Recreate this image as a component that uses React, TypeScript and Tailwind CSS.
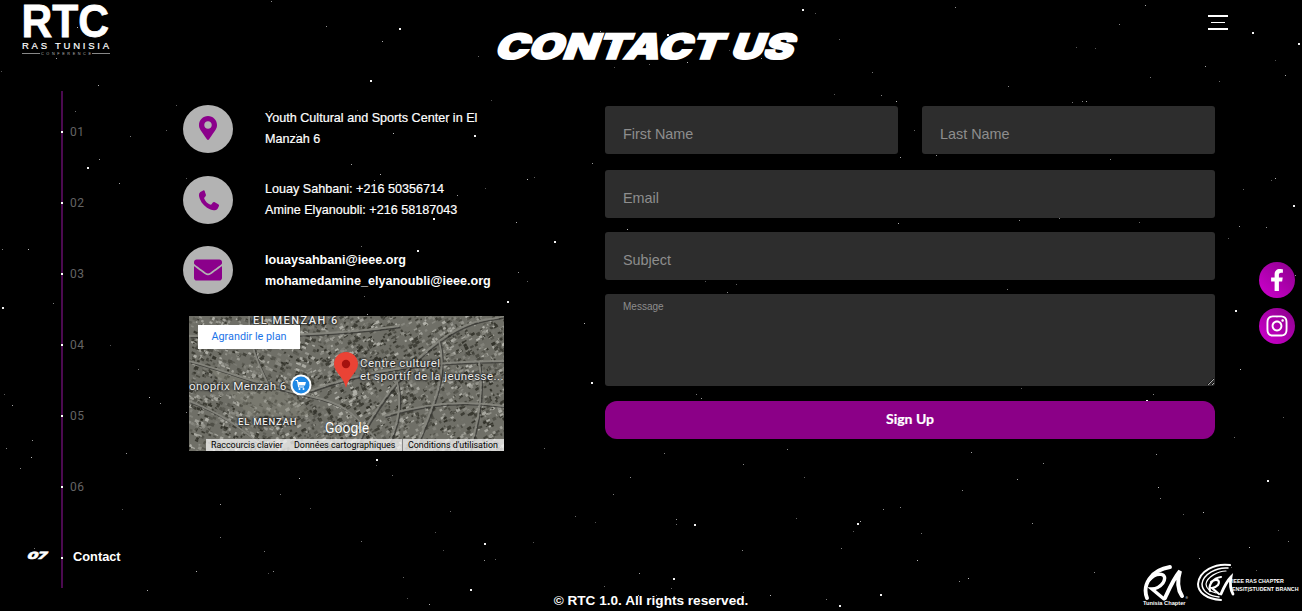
import React from "react";
import { FaMapMarkerAlt, FaEnvelope, FaFacebookF, FaInstagram } from "react-icons/fa";

function rng(seed: number) {
  let s = seed;
  return () => {
    s = (s * 1664525 + 1013904223) % 4294967296;
    return s / 4294967296;
  };
}

function Stars() {
  const r = rng(77);
  const stars = Array.from({ length: 300 }, () => {
    const big = r() < 0.14;
    return { x: Math.floor(r() * 1302), y: Math.floor(r() * 611), s: big ? 2 : 1, o: big ? 0.95 : 0.3 + r() * 0.45 };
  });
  return (
    <svg className="absolute inset-0" width="1302" height="611" shapeRendering="crispEdges">
      {stars.map((t, i) => (
        <rect key={i} x={t.x} y={t.y} width={t.s} height={t.s} fill="#fff" opacity={t.o} />
      ))}
    </svg>
  );
}

function MapArt() {
  const r = rng(2024);
  const tiles: { x: number; y: number; w: number; h: number; c: string; a: number }[] = [];
  for (let i = 0; i < 3400; i++) {
    const dark = r() < 0.5;
    const v = Math.floor(dark ? 50 + r() * 45 : 110 + r() * 70);
    const x = r() * 315;
    const y = r() * 135;
    tiles.push({
      x,
      y,
      w: 1.5 + r() * 3,
      h: 1.2 + r() * 2,
      c: `rgb(${v},${v},${v - 8})`,
      a: x + y * 0.6 < 150 ? 25 : -30,
    });
  }
  const roads = [
    "M0 45 C40 55 70 70 120 80 S170 110 200 135",
    "M165 135 C180 100 215 50 250 25 S300 5 315 0",
    "M0 20 C60 20 140 20 210 10",
    "M120 75 C160 60 220 45 315 45",
    "M195 100 C240 85 280 85 315 90",
    "M0 85 C40 100 60 120 80 135",
    "M60 0 C60 30 70 50 80 70",
    "M250 25 C260 60 240 100 225 135",
    "M205 55 C215 85 210 110 195 135",
    "M290 45 C295 75 290 105 280 135",
  ];
  return (
    <svg className="absolute inset-0 blur-[0.5px]" width="315" height="135">
      <rect width="315" height="135" fill="#6f6f67" />
      {tiles.map((t, i) => (
        <rect key={i} x={t.x} y={t.y} width={t.w} height={t.h} fill={t.c} transform={`rotate(${t.a} ${t.x} ${t.y})`} />
      ))}
      <path d="M20 52 L95 70 L125 100 L60 100 Z" fill="#85857a" opacity="0.45" />
      <g fill="none" stroke="#333330" strokeWidth="1.400" opacity="0.75">
        {roads.map((d, i) => (
          <path key={i} d={d} transform="translate(1.500 1.500)" />
        ))}
      </g>
      <g fill="none" stroke="#86867e" strokeWidth="1.800" opacity="0.95">
        {roads.map((d, i) => (
          <path key={i} d={d} />
        ))}
      </g>
      <path d="M157 36c-6.600 0-12 5.300-12 11.800 0 8.700 9.500 12.500 12 24.200 2.500-11.700 12-15.500 12-24.200 0-6.500-5.400-11.800-12-11.800z" fill="#ea4335" />
      <circle cx="157" cy="48" r="4.200" fill="#a5120f" />
      <circle cx="112" cy="69" r="10.500" fill="#fff" />
      <circle cx="112" cy="69" r="8.500" fill="#1e88e5" />
      <path d="M106.500 64.500h2l1.200 6.500h5.300" fill="none" stroke="#fff" strokeWidth="1.200" />
      <path d="M109 66h8l-1 3.500h-6.500z" fill="#fff" />
      <circle cx="110.500" cy="73" r="1" fill="#fff" />
      <circle cx="114.500" cy="73" r="1" fill="#fff" />
    </svg>
  );
}

function Logo() {
  return (
    <svg width="90" height="56" viewBox="0 0 90 56" className="ml-[21px] block font-['Liberation_Sans',sans-serif]" fill="#fff">
      <text x="0.500" y="36.500" fontSize="46" fontWeight="700" textLength="87.500" lengthAdjust="spacingAndGlyphs" stroke="#fff" strokeWidth="0.800">RTC</text>
      <text x="1" y="49" fontSize="9.500" fontWeight="400" textLength="87" lengthAdjust="spacing" stroke="#fff" strokeWidth="0.200">RAS TUNISIA</text>
      <rect x="1" y="53" width="18" height="1" fill="#888" />
      <text x="20" y="55" fontSize="3.800" textLength="50" lengthAdjust="spacing" fill="#b5b5b5">CONFERENCE</text>
      <rect x="71" y="53" width="18" height="1" fill="#888" />
    </svg>
  );
}

const navNums = ["01", "02", "03", "04", "05", "06"];

function Nav() {
  return (
    <div className="w-[183px] shrink-0">
      <div className="ml-[61px] flex h-[497px] w-[2px] flex-col bg-[#4b0a50] pt-[5px]">
        {navNums.map((n) => (
          <div key={n} className="flex h-[71px] shrink-0 items-center">
            <span className="h-[2px] w-[2px] shrink-0 bg-white" />
            <span className="ml-[7px] font-['Roboto',sans-serif] text-[12px] tracking-[0.5px] text-[#646464]">{n}</span>
          </div>
        ))}
        <div className="relative flex h-[71px] shrink-0 items-center">
          <span className="h-[2px] w-[2px] shrink-0 bg-white" />
          <span className="absolute left-[-33px] top-[26px] origin-left scale-x-[1.5] skew-x-[-14deg] font-['Inter',sans-serif] text-[10px] font-black leading-[14px] text-white [-webkit-text-stroke:0.5px_white]">07</span>
          <span className="ml-[10px] -mt-[2px] whitespace-nowrap font-['Liberation_Sans',sans-serif] text-[12.800px] font-bold text-white">Contact</span>
        </div>
      </div>
    </div>
  );
}

function Info({ icon, lines, bold, rowCls }: { icon: React.ReactNode; lines: string[]; bold?: boolean; rowCls: string }) {
  return (
    <div className={`flex ${rowCls}`}>
      <div className="flex h-[48px] w-[50px] shrink-0 items-center justify-center rounded-[50%] bg-[#b3b3b3] text-[#8b008b]">{icon}</div>
      <div className={`ml-[32px] font-['Liberation_Sans',sans-serif] text-[12.600px] leading-[20.500px] text-white ${bold ? "pt-[4px] font-bold" : "pt-[3px] [-webkit-text-stroke:0.2px_white]"}`}>
        {lines.map((l) => (
          <div key={l} className="whitespace-nowrap">{l}</div>
        ))}
      </div>
    </div>
  );
}

function PhoneIcon() {
  return (
    <svg width="23" height="23" viewBox="0 0 24 24" fill="currentColor">
      <path d="M6.500 1.500 3.500 3.200C1.500 4.500 1.800 7.500 3 10.500 5 15.500 9 19.500 14 21.500 17 22.800 20 22.500 21.500 20.500L22.800 18C23.200 17.200 23 16.500 22.200 16L18.500 13.800C17.800 13.400 17 13.500 16.500 14.200L15.200 16C14.800 16.500 14.200 16.600 13.500 16.300 10.800 15 8.700 12.800 7.600 10.200 7.300 9.500 7.500 8.900 8 8.500L8.900 7.500C9.400 7 9.500 6.200 9.100 5.500L8 2C7.700 1.300 7.100 1.200 6.500 1.500Z" />
    </svg>
  );
}

function MapBox() {
  const label = "absolute whitespace-nowrap font-['Roboto',sans-serif] text-[#ececec] [text-shadow:0_0_2px_#1a1a1a,0_0_2px_#1a1a1a,0_0_3px_#1a1a1a]";
  return (
    <div className="relative ml-[6px] mt-[22px] h-[135px] w-[315px] overflow-hidden bg-[#6f6f67]">
      <MapArt />
      <span className={`${label} left-[64px] top-[0px] text-[11px] font-medium leading-[9px] tracking-[1.5px]`}>EL MENZAH 6</span>
      <span className={`${label} left-[0px] top-[62px] text-[11.700px] tracking-[0.3px]`}>onoprix Menzah 6</span>
      <span className={`${label} left-[49px] top-[99px] text-[9.500px] font-medium tracking-[0.8px]`}>EL MENZAH</span>
      <span className={`${label} left-[171px] top-[39px] text-[11.500px] tracking-[0.4px]`}>Centre culturel</span>
      <span className={`${label} left-[171px] top-[52px] text-[11.500px] tracking-[0.45px]`}>et sportif de la jeunesse...</span>
      <div className="absolute left-[9px] top-[9px] flex h-[24px] w-[102px] items-center justify-center bg-white font-['Roboto',sans-serif] text-[10.800px] text-[#1a73e8]">Agrandir le plan</div>
      <span className="absolute left-[136px] top-[102px] font-['Roboto',sans-serif] text-[14px] leading-[20px] text-white [text-shadow:0_0_1px_#333]">Google</span>
      <div className="absolute bottom-0 right-0 flex h-[12px] w-[298px] items-center bg-[#ffffffb8] font-['Roboto',sans-serif] text-[8.900px] leading-[12px] text-black">
        <span className="w-[83px] shrink-0 whitespace-nowrap pl-[5px]">Raccourcis clavier</span>
        <span className="w-[113px] shrink-0 whitespace-nowrap pl-[5px]">Données cartographiques</span>
        <span className="whitespace-nowrap border-l border-[#888] pl-[5px]">Conditions d'utilisation</span>
      </div>
    </div>
  );
}

const fieldCls = "h-[48px] w-full rounded-[3px] bg-[#2d2d2d] px-[18px] pt-[8px] font-['Liberation_Sans',sans-serif] text-[14.400px] text-white outline-none placeholder:text-[#8e8e8e]";

function Form() {
  return (
    <div className="w-[610px] shrink-0 pt-[15px]">
      <div className="flex gap-[24px]">
        <input className={fieldCls} placeholder="First Name" />
        <input className={fieldCls} placeholder="Last Name" />
      </div>
      <input className={`${fieldCls} mt-[16px] block`} placeholder="Email" />
      <input className={`${fieldCls} mt-[14px] block`} placeholder="Subject" />
      <textarea className="mt-[14px] block h-[92px] w-full rounded-[3px] bg-[#2d2d2d] px-[18px] py-[5px] font-['Liberation_Sans',sans-serif] text-[10px] text-white outline-none placeholder:text-[#8e8e8e]" placeholder="Message" />
      <button className="mt-[15px] block h-[38px] w-full rounded-[12px] bg-[#8b0087] pb-[3px] font-['Lato',sans-serif] text-[14px] font-bold text-white [-webkit-text-stroke:0.2px_white]">Sign Up</button>
    </div>
  );
}

function Partners() {
  return (
    <div className="absolute bottom-[5px] right-[3px] flex items-start gap-[9px] text-white">
      <div className="relative mt-[2px] h-[41px] w-[45px]">
        <svg width="45" height="36" viewBox="0 0 45 36" fill="none" stroke="#fff" strokeLinecap="round">
          <path d="M4 33C-1 20 8 5 27 2" strokeWidth="3.800" />
          <path d="M6 15C14 6 26 8 20 18C17 22 12 24 9 24L21 34" strokeWidth="3.400" />
          <path d="M22 33C27 22 31 13 37 6C34 16 35 25 39 31" strokeWidth="4" />
        </svg>
        <span className="absolute bottom-0 left-0 whitespace-nowrap font-['Liberation_Sans',sans-serif] text-[5.700px] font-bold leading-[6px]">Tunisia Chapter</span>
        <span className="absolute bottom-[6px] right-[0px] text-[3px] leading-[4px]">®</span>
      </div>
      <div className="relative h-[43px] w-[102px]">
        <svg width="38" height="38" viewBox="0 0 38 38" fill="none" stroke="#fff" strokeLinecap="round">
          <path d="M33 2C18 0 2 8 1 21C1 29 9 36 24 37" strokeWidth="2" />
          <path d="M31 5C20 4 6 11 5 21C5 28 12 33 22 34" strokeWidth="1.500" />
          <path d="M29 8C21 8 10 14 9 21C9 25 13 29 19 30" strokeWidth="1.200" />
          <path d="M13 28C11 22 16 15 24 14M14 19C19 15 24 17 21 22C19 24 17 25 15 25L22 31" strokeWidth="2.200" />
          <path d="M24 31C27 24 30 18 34 14C33 20 33 26 36 31" strokeWidth="2.800" />
        </svg>
        <div className="absolute left-[35px] top-[14px] whitespace-nowrap font-['Liberation_Sans',sans-serif] text-[5.300px] font-bold leading-[8px]">
          <div>IEEE RAS CHAPTER</div>
          <div>ENSIT|STUDENT BRANCH</div>
        </div>
      </div>
    </div>
  );
}

export default function App() {
  return (
    <div className="relative h-[611px] w-[1302px] overflow-hidden bg-black">
      <Stars />
      <div className="relative flex h-full flex-col">
        <header className="flex h-[91px] shrink-0 items-start">
          <Logo />
          <h1 className="ml-[387px] mt-[29px] w-[298px] scale-x-[1.28] skew-x-[-16deg] whitespace-nowrap text-center font-['Inter',sans-serif] text-[35px] font-black uppercase leading-[34px] text-white [-webkit-text-stroke:1.5px_white]">Contact Us</h1>
          <div className="ml-[412px] mt-[15px] flex w-[20px] flex-col items-center">
            <span className="h-[2px] w-[20px] bg-white" />
            <span className="mt-[5px] h-px w-[14px] bg-white" />
            <span className="mt-[5px] h-[2px] w-[20px] bg-white" />
          </div>
        </header>
        <main className="flex h-[500px] shrink-0">
          <Nav />
          <div className="w-[422px] shrink-0 pt-[14px]">
            <Info rowCls="h-[71px]" icon={<FaMapMarkerAlt size={24} className="-mt-[3px]" />} lines={["Youth Cultural and Sports Center in El", "Manzah 6"]} />
            <Info rowCls="h-[70px]" icon={<PhoneIcon />} lines={["Louay Sahbani: +216 50356714", "Amine Elyanoubli: +216 58187043"]} />
            <Info rowCls="h-[48px]" bold icon={<FaEnvelope size={28} />} lines={["louaysahbani@ieee.org", "mohamedamine_elyanoubli@ieee.org"]} />
            <MapBox />
          </div>
          <Form />
        </main>
        <footer className="text-center font-['Liberation_Sans',sans-serif] text-[13.600px] font-bold leading-[20px] text-white">© RTC 1.0. All rights reserved.</footer>
      </div>
      <div className="absolute left-[1259px] top-[262px] flex flex-col gap-[10px]">
        <a className="flex h-[36px] w-[36px] items-center justify-center rounded-full bg-gradient-to-tr from-[#d000d0] to-[#8b008b] text-white"><FaFacebookF size={22} /></a>
        <a className="flex h-[36px] w-[36px] items-center justify-center rounded-full bg-gradient-to-tr from-[#d000d0] to-[#8b008b] text-white"><FaInstagram size={24} /></a>
      </div>
      <Partners />
    </div>
  );
}
